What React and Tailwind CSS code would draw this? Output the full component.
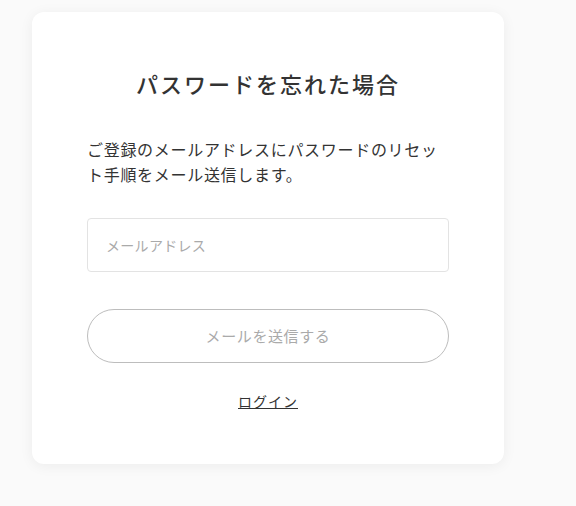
import React, { useState } from "react";

export default function App() {
  const [email, setEmail] = useState("");

  return (
    <div
      className="min-h-[506px] w-full bg-[#fafafa] pt-[12px] pl-[32px]"
      style={{ fontFamily: '"Noto Sans CJK JP", "Noto Sans", sans-serif' }}
    >
      <div className="w-[472px] h-[452px] bg-white rounded-[12px] shadow-[0_2px_14px_rgba(0,0,0,0.06)] px-[55px] pt-[56px] flex flex-col">
        <h1 className="text-center text-[22px] leading-[30px] font-medium tracking-[2px] text-[#333]">
          パスワードを忘れた場合
        </h1>

        <p className="mt-[39px] text-[16px] leading-[25px] tracking-[0.7px] text-[#333]">
          ご登録のメールアドレスにパスワードのリセット手順をメール送信します。
        </p>

        <input
          type="email"
          placeholder="メールアドレス"
          value={email}
          onChange={(e) => setEmail(e.target.value)}
          className="mt-[31px] w-full h-[54px] border border-[#e3e3e3] rounded-[4px] pl-[18px] pr-4 text-[14px] tracking-[0.3px] text-[#333] placeholder:text-[#aaa] outline-none"
        />

        <button
          type="button"
          className="mt-[37px] w-full h-[54px] rounded-full border border-[#bdbdbd] text-[15px] tracking-[0.6px] text-[#aaa] bg-white"
        >
          メールを送信する
        </button>

        <div className="mt-[25px] text-center">
          <a href="#" className="text-[14px] leading-[20px] tracking-[1px] text-[#333] underline">
            ログイン
          </a>
        </div>
      </div>
    </div>
  );
}
